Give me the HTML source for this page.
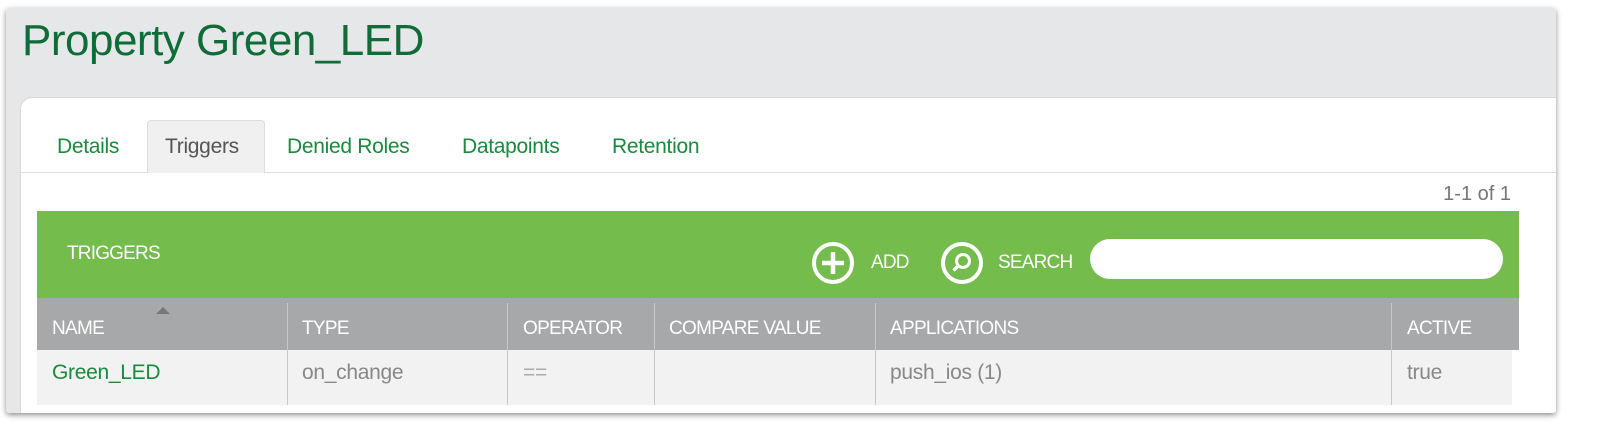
<!DOCTYPE html>
<html><head><style>
*{margin:0;padding:0;box-sizing:border-box}
body{width:1600px;height:434px;background:#fff;font-family:"Liberation Sans",sans-serif;position:relative;overflow:hidden}
.win{position:absolute;left:6px;top:8px;width:1550px;height:405px;background:#e6e7e9;box-shadow:0 2px 6px rgba(0,0,0,.45);border-radius:3px;overflow:hidden}
.title{position:absolute;left:16px;top:8px;font-size:44px;color:#0f6b37;letter-spacing:-0.5px}
.panel{position:absolute;left:14px;top:89px;width:1545px;height:330px;background:#fff;border-radius:12px 0 0 0;border:1px solid #d8d8d8}
.tabline{position:absolute;left:14px;top:164px;width:1545px;height:1px;background:#ddd}
.tab{position:absolute;top:127px;font-size:21px;color:#1a8a3e;letter-spacing:-0.3px}
.tsel{position:absolute;left:141px;top:112px;width:118px;height:53px;background:#f0f0f0;border:1px solid #ddd;border-bottom:none;border-radius:4px 4px 0 0}
.pg{position:absolute;right:45px;top:175px;font-size:20px;color:#777}
.green{position:absolute;left:31px;top:203px;width:1482px;height:87px;background:#74bc4b}
.hdr{position:absolute;left:31px;top:290px;width:1482px;height:52px;background:#a7a8aa}
.row{position:absolute;left:31px;top:342px;width:1475px;height:55px;background:#f2f2f2}
.h{position:absolute;top:310px;font-size:19px;color:#fff;letter-spacing:-0.7px}
.c{position:absolute;top:353px;font-size:21px;color:#888;letter-spacing:-0.3px}
.sep{position:absolute;width:1px;background:#c8c8c8}
.w{color:#fff;position:absolute;font-size:19px;letter-spacing:-0.8px}
</style></head><body>
<div class="win">
<div class="title">Property Green_LED</div>
<div class="panel"></div>
<div class="tabline"></div>
<div class="tsel"></div>
<div class="tab" style="left:51px">Details</div>
<div class="tab" style="left:159px;color:#555">Triggers</div>
<div class="tab" style="left:281px">Denied Roles</div>
<div class="tab" style="left:456px">Datapoints</div>
<div class="tab" style="left:606px">Retention</div>
<div class="pg">1-1 of 1</div>
<div class="green"></div>
<div class="w" style="left:61px;top:235px">TRIGGERS</div>
<svg style="position:absolute;left:805px;top:233px" width="44" height="44" viewBox="0 0 44 44"><circle cx="22" cy="22" r="19" fill="none" stroke="#fff" stroke-width="4"/><path d="M22 11v22M11 22h22" stroke="#fff" stroke-width="4.5"/></svg>
<div class="w" style="left:865px;top:244px">ADD</div>
<svg style="position:absolute;left:934px;top:233px" width="44" height="44" viewBox="0 0 44 44"><circle cx="22" cy="22" r="19" fill="none" stroke="#fff" stroke-width="4"/><circle cx="23" cy="20" r="6.5" fill="none" stroke="#fff" stroke-width="3"/><path d="M18.5 24.5l-5 5" stroke="#fff" stroke-width="3.5"/></svg>
<div class="w" style="left:992px;top:244px">SEARCH</div>
<div style="position:absolute;left:1084px;top:231px;width:413px;height:40px;background:#fff;border-radius:20px"></div>
<div class="hdr"></div>
<div class="row"></div>
<div style="position:absolute;left:150px;top:299px;width:0;height:0;border-left:7px solid transparent;border-right:7px solid transparent;border-bottom:7px solid #777"></div>
<div class="sep" style="left:281px;top:295px;height:102px"></div>
<div class="sep" style="left:501px;top:295px;height:102px"></div>
<div class="sep" style="left:648px;top:295px;height:102px"></div>
<div class="sep" style="left:869px;top:295px;height:102px"></div>
<div class="sep" style="left:1385px;top:295px;height:102px"></div>
<div class="h" style="left:46px">NAME</div>
<div class="h" style="left:296px">TYPE</div>
<div class="h" style="left:517px">OPERATOR</div>
<div class="h" style="left:663px">COMPARE VALUE</div>
<div class="h" style="left:884px">APPLICATIONS</div>
<div class="h" style="left:1401px">ACTIVE</div>
<div class="c" style="left:46px;color:#1a8a3e">Green_LED</div>
<div class="c" style="left:296px">on_change</div>
<div class="c" style="left:517px;color:#aaa">==</div>
<div class="c" style="left:884px">push_ios (1)</div>
<div class="c" style="left:1401px">true</div>
</div>
</body></html>
